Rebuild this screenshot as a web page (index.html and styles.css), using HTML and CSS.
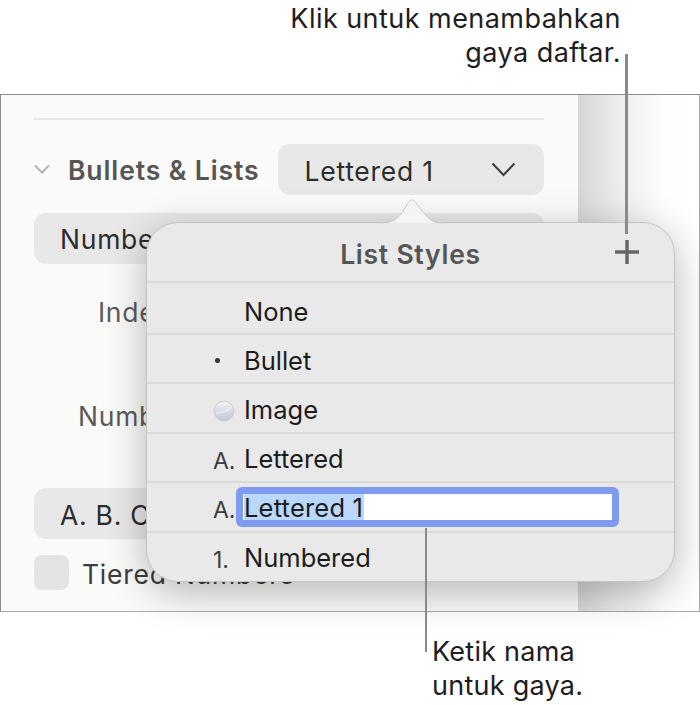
FILE: index.html
```html
<!DOCTYPE html>
<html lang="id">
<head>
    <meta charset="UTF-8">
    <meta name="viewport" content="width=device-width, initial-scale=1.0">
    <title>List Styles</title>
    <link rel="stylesheet" href="styles.css">
</head>
<body>
    <div id="page">
        <p class="callout callout-top">Klik untuk menambahkan<br>gaya daftar.</p>
        <div id="shot">
            <div id="sidebar">
                <div class="divider"></div>
                <div class="section-row">
                    <svg class="disclosure" width="16" height="10" viewBox="0 0 16 10"><path d="M1 1.5 L8 8.5 L15 1.5" fill="none" stroke="#b4b4b4" stroke-width="2"/></svg>
                    <span class="section-title">Bullets &amp; Lists</span>
                    <div class="select select-style">
                        <span class="select-value">Lettered 1</span>
                        <svg width="25" height="15" viewBox="0 0 25 15"><path d="M1.5 1.5 L12.5 13 L23.5 1.5" fill="none" stroke="#3c3c3c" stroke-width="2"/></svg>
                    </div>
                </div>
                <div class="select select-full select-type">Numbers</div>
                <div class="field-label label-indent">Indent</div>
                <div class="field-label label-number">Number</div>
                <div class="select select-full select-format">A. B. C.</div>
                <div class="check-row">
                    <span class="checkbox"></span>
                    <span class="check-label">Tiered Numbers</span>
                </div>
            </div>
            <div id="backdrop"></div>

            <div id="popover">
                <svg class="pop-arrow" width="64" height="26" viewBox="0 0 64 26"><path d="M0 25 C12 25 16 22 22 15 L28 5 C30 1 34 1 36 5 L44 15 C50 22 52 25 64 25 Z" fill="#f4f4f4"/><path d="M0 25 C12 25 16 22 22 15 L28 5 C30 1 34 1 36 5 L44 15 C50 22 52 25 64 25" fill="none" stroke="#c9c9c9" stroke-width="1"/></svg>
                <div class="pop-header">
                    <span class="pop-title">List Styles</span>
                    <svg class="pop-add" width="26" height="26" viewBox="0 0 26 26"><path d="M13 1 V25 M1 13 H25" fill="none" stroke="#666" stroke-width="3.4"/></svg>
                </div>
                <div class="row row-first"><span class="marker"></span><span>None</span></div>
                <div class="row"><span class="marker"><span class="dot"></span></span><span>Bullet</span></div>
                <div class="row">
                    <span class="marker">
                        <svg class="pic" width="22" height="22" viewBox="0 0 22 22">
                            <defs>
                                <linearGradient id="ball" x1="0" y1="0" x2="0" y2="1">
                                    <stop offset="0" stop-color="#f0f1f4"/>
                                    <stop offset="1" stop-color="#c2c7d6"/>
                                </linearGradient>
                            </defs>
                            <circle cx="11" cy="11" r="10" fill="url(#ball)" stroke="#c9ccd4" stroke-width="1"/>
                            <path d="M3 13 C8 13 14 11 19 7" fill="none" stroke="#f4f5f8" stroke-width="1"/>
                        </svg>
                    </span>
                    <span>Image</span>
                </div>
                <div class="row"><span class="marker marker-text">A.</span><span>Lettered</span></div>
                <div class="row row-edit">
                    <span class="marker marker-text">A.</span>
                    <div class="name-input"><span class="selected">Lettered 1</span></div>
                </div>
                <div class="row"><span class="marker marker-text">1.</span><span>Numbered</span></div>
            </div>

            <div class="leader leader-top"></div>
        </div>
        <div class="leader leader-bottom"></div>
        <p class="callout callout-bottom">Ketik nama<br>untuk gaya.</p>
    </div>
</body>
</html>
```

FILE: styles.css
```css
* {
    box-sizing: border-box;
}
html, body {
    margin: 0;
    background: white;
}
body {
    font-family: Inter, "Liberation Sans", sans-serif;
    color: #1e1e1e;
}
#page {
    position: relative;
    width: 700px;
    height: 705px;
    padding-top: 94px;
    overflow: hidden;
}
#shot {
    position: relative;
    display: flex;
    height: 518px;
    border: 1px solid #8c8c8c;
    border-bottom-color: #a8a8a8;
    border-right-color: #a8a8a8;
}
#sidebar {
    width: 577px;
    padding: 23px 34px 0 33px;
    background: #fafaf9;
    overflow: hidden;
    font-size: 26.5px;
    letter-spacing: 0.75px;
}
#backdrop {
    flex: 1;
    background: linear-gradient(90deg, #d6d6d6 0, #ececec 40px, #fdfdfd 85px, white 100%);
}
.divider {
    height: 2px;
    background: #e8e8e8;
}
.section-row {
    display: flex;
    align-items: center;
    margin-top: 23px;
    height: 52px;
}
.disclosure {
    margin-right: 18px;
}
.section-title {
    width: 211px;
    padding-top: 2px;
    font-weight: 600;
    letter-spacing: 0.9px;
    color: #555;
    white-space: nowrap;
}
.select {
    height: 51px;
    border-radius: 12px;
    background: #e8e8e8;
    line-height: 53px;
    color: #2c2c2c;
}
.select-style {
    display: flex;
    align-items: center;
    justify-content: space-between;
    width: 266px;
    padding: 0 28px 0 26px;
}
.select-value {
    padding-top: 4px;
    line-height: 32px;
}
.select-full {
    padding-left: 26px;
}
.select-type {
    margin-top: 18px;
}
.field-label {
    color: #5a5a5a;
}
.label-indent {
    margin-top: 32px;
    padding-left: 64px;
    line-height: 32px;
}
.label-number {
    margin-top: 72px;
    padding-left: 44px;
    line-height: 32px;
}
.select-format {
    margin-top: 56px;
    line-height: 54px;
}
.check-row {
    display: flex;
    align-items: center;
    margin-top: 16px;
}
.checkbox {
    width: 35px;
    height: 35px;
    border-radius: 8px;
    background: #e3e3e3;
}
.check-label {
    margin-left: 13px;
    padding-top: 2px;
    color: #3c3c3c;
    white-space: nowrap;
}

/* popover, sits over the sidebar */
#popover {
    position: absolute;
    left: 145px;
    top: 127px;
    width: 529px;
    height: 360px;
    border: 1px solid #c4c4c4;
    border-radius: 32px;
    background: #e9e9e9;
    box-shadow: 0 10px 40px rgba(0, 0, 0, 0.28);
    font-size: 25.5px;
    color: #1c1c1c;
}
.pop-arrow {
    position: absolute;
    left: 233px;
    top: -25px;
}
.pop-header {
    display: flex;
    align-items: center;
    justify-content: center;
    position: relative;
    height: 58px;
}
.pop-title {
    padding-top: 3px;
    font-size: 26.5px;
    letter-spacing: 0.75px;
    font-weight: 600;
    color: #555;
}
.pop-add {
    position: absolute;
    right: 34px;
    top: 16px;
}
.row {
    display: flex;
    align-items: center;
    height: 49.4px;
    padding-left: 66px;
    padding-top: 3px;
    border-top: 2px solid #dadada;
}
.row-first {
    height: 52px;
    padding-top: 6px;
}
.row-edit {
    padding-top: 1px;
}
.marker {
    display: flex;
    align-items: center;
    flex: none;
    width: 31px;
    height: 100%;
}
.marker-text {
    padding-top: 4px;
    font-size: 23px;
    color: #3c3c3c;
}
.row-edit .marker {
    width: 23px;
    padding-top: 6px;
}
.dot {
    width: 5px;
    height: 5px;
    margin-left: 2px;
    border-radius: 50%;
    background: #333;
}
.pic {
    margin-top: 2px;
}
.name-input {
    display: flex;
    align-items: center;
    width: 383px;
    height: 40px;
    border: 7px solid #7f9bef;
    border-radius: 6px;
    background: white;
    padding-left: 1px;
}
.selected {
    background: #b9d8fb;
    padding-top: 2px;
    line-height: 24px;
    letter-spacing: 0.2px;
    padding-right: 1px;
}

/* callouts */
.callout {
    position: absolute;
    margin: 0;
    font-size: 27px;
    letter-spacing: 0.45px;
    line-height: 34px;
    color: #1d1d1f;
}
.callout-top {
    top: 2px;
    right: 79px;
    text-align: right;
}
.callout-bottom {
    top: 635px;
    left: 432px;
    letter-spacing: 0.25px;
}
.leader {
    position: absolute;
    background: #8a8a8a;
}
.leader-top {
    left: 624px;
    top: -41px;
    width: 3px;
    height: 180px;
}
.leader-bottom {
    left: 425px;
    top: 528px;
    width: 2px;
    height: 124px;
}
```
